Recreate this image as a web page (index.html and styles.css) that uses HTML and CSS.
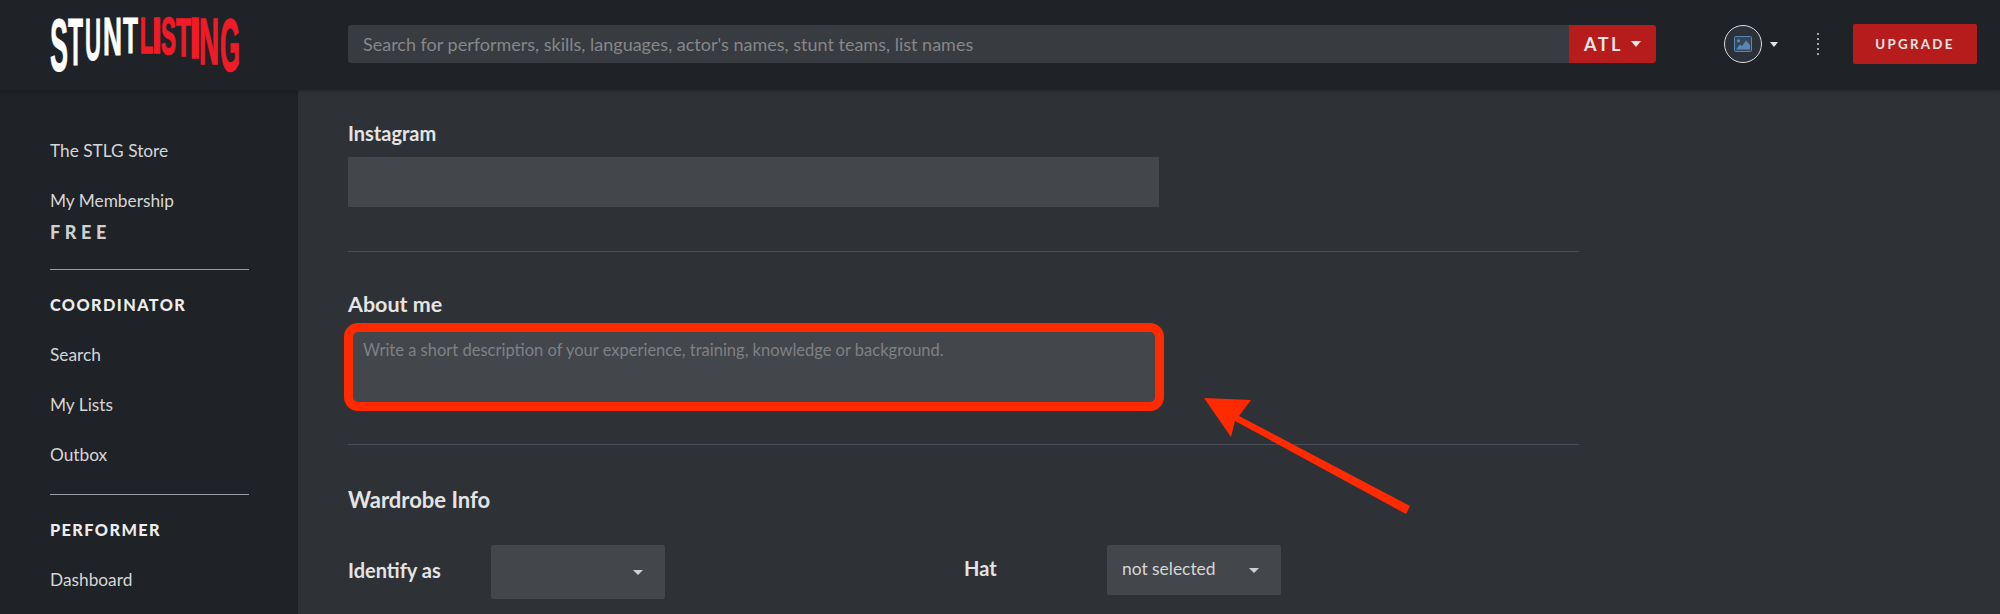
FILE: index.html
```html
<!DOCTYPE html>
<html lang="en">
<head>
<meta charset="utf-8">
<title>Stunt Listing</title>
<link rel="stylesheet" href="styles.css">
</head>
<body>
<header class="topbar">
  <a class="logo" aria-label="Stunt Listing">
    <svg width="200" height="62" viewBox="45 13 200 62">
      <g class="logo-white">
        <text transform="translate(50 71) scale(.36 1)" font-size="75">S</text>
        <text transform="translate(68 65) scale(.367 1)" font-size="67">T</text>
        <text transform="translate(85 60) scale(.37 1)" font-size="60">U</text>
        <text transform="translate(103 55) scale(.496 1)" font-size="53">N</text>
        <text transform="translate(123 53) scale(.49 1)" font-size="50">T</text>
      </g>
      <g class="logo-red">
        <text transform="translate(140 53) scale(.426 1)" font-size="50">L</text>
        <text transform="translate(152 53) scale(.7 1)" font-size="50">I</text>
        <text transform="translate(161 54) scale(.43 1)" font-size="52">S</text>
        <text transform="translate(176 56) scale(.455 1)" font-size="54">T</text>
        <text transform="translate(189.5 58) scale(.75 1)" font-size="57">I</text>
        <text transform="translate(199 64) scale(.426 1)" font-size="65">N</text>
        <text transform="translate(220 71) scale(.343 1)" font-size="75">G</text>
      </g>
    </svg>
  </a>
  <form class="search">
    <div class="search-input">Search for performers, skills, languages, actor's names, stunt teams, list names</div>
    <button class="city" type="button">ATL<span class="caret caret-city"></span></button>
  </form>
  <div class="account">
    <span class="avatar">
      <svg width="18" height="16" viewBox="0 0 18 16">
        <rect class="pic-frame" x="0.5" y="0.5" width="17" height="15" rx="1"/>
        <circle class="pic-fill" cx="4.5" cy="4.8" r="1.6"/>
        <path class="pic-fill" d="M2 13.5 L6 8.5 L8 10 L12 4.5 L16 9 V13.5 Z"/>
      </svg>
    </span>
    <span class="caret caret-account"></span>
  </div>
  <div class="dots"><i></i><i></i><i></i><i></i><i></i></div>
  <button class="upgrade" type="button">UPGRADE</button>
</header>
<div class="body-row">
  <nav class="sidebar">
    <a class="nav-item">The STLG Store</a>
    <a class="nav-item">My Membership</a>
    <div class="plan">FREE</div>
    <hr class="nav-rule">
    <div class="nav-head">COORDINATOR</div>
    <a class="nav-item">Search</a>
    <a class="nav-item">My Lists</a>
    <a class="nav-item">Outbox</a>
    <hr class="nav-rule nav-rule-tight">
    <div class="nav-head">PERFORMER</div>
    <a class="nav-item">Dashboard</a>
  </nav>
  <main class="content">
    <section class="field-block first">
      <label class="field-label">Instagram</label>
      <div class="text-input"></div>
    </section>
    <section class="field-block about">
      <label class="field-label about-label">About me</label>
      <div class="textarea">Write a short description of your experience, training, knowledge or background.
        <span class="highlight"></span>
      </div>
    </section>
    <section class="wardrobe">
      <h2 class="section-title">Wardrobe Info</h2>
      <div class="wardrobe-grid">
        <div class="row">
          <span class="row-label">Identify as</span>
          <div class="select tall"><span></span><span class="caret caret-select"></span></div>
        </div>
        <div class="row">
          <span class="row-label">Hat</span>
          <div class="select"><span class="select-value">not selected</span><span class="caret caret-select"></span></div>
        </div>
        <div class="row"></div>
        <div class="row">
          <span class="row-label"></span>
          <div class="select"><span></span></div>
        </div>
      </div>
    </section>
  </main>
</div>
<svg class="arrow" width="230" height="130" viewBox="1195 390 230 130">
  <path class="arrow-shape" d="M1204 398 L1251 400 L1239 416 L1410 506 L1406 514 L1235 421 L1231 437 Z"/>
</svg>
</body>
</html>
```
FILE: styles.css
```css
* { box-sizing: border-box; }
html, body { margin: 0; height: 614px; overflow: hidden; }
body {
  position: relative;
  background: #2e3136;
  color: #e6e6e6;
  font-family: "Lato", "Open Sans", sans-serif;
  font-size: 16px;
}
.topbar {
  height: 90px;
  background: #1f2226;
  display: flex;
  align-items: center;
  padding: 0 0 2px 45px;
  box-shadow: 0 1px 4px rgba(0,0,0,.25);
  position: relative;
}
.logo { width: 303px; height: 62px; display: block; flex: none; }
.logo svg { display: block; overflow: visible; }
.logo text { font-family: "Liberation Sans", sans-serif; font-weight: 700; stroke-width: 1; }
.logo-white { fill: #fff; stroke: #fff; }
.logo-red { fill: #f01b27; stroke: #f01b27; }
.logo-red text { stroke-width: 1.6; }
.search { display: flex; width: 1309px; height: 38px; flex: none; }
.search-input {
  width: 1221px;
  background: #383b3f;
  color: #85878a;
  font-size: 18px;
  line-height: 38px;
  padding-left: 15px;
  border-radius: 3px 0 0 3px;
}
.city {
  width: 87px;
  background: #b71c1c;
  color: #e6e6e6;
  border: 0;
  border-radius: 0 3px 3px 0;
  font: 700 18px "Lato", sans-serif;
  letter-spacing: 2.5px;
  display: flex;
  align-items: center;
  justify-content: center;
  gap: 8px;
  padding: 0;
}
.caret {
  display: block;
  width: 0;
  height: 0;
  border-style: solid;
  border-color: #e6e6e6 transparent transparent;
}
.caret-city { border-width: 6px 5px 0; }
.account { display: flex; align-items: center; margin-left: 67px; gap: 8px; }
.avatar {
  width: 38px;
  height: 38px;
  border: 1.5px solid #dcdcdc;
  border-radius: 50%;
  background: #2b3138;
  display: flex;
  align-items: center;
  justify-content: center;
}
.pic-frame { fill: #33465a; stroke: #5b86b3; }
.pic-fill { fill: #5b86b3; }
.caret-account { border-width: 5px 4.5px 0; }
.dots {
  margin-left: 38px;
  width: 4px;
  height: 22px;
  display: flex;
  flex-direction: column;
  justify-content: space-between;
  align-items: center;
}
.dots i { width: 2px; height: 2px; background: #d0d0d0; border-radius: 50%; display: block; }
.upgrade {
  margin-left: 33px;
  width: 124px;
  height: 40px;
  background: #b71c1c;
  color: #e6e6e6;
  border: 0;
  border-radius: 2px;
  font: 700 13.3px "Lato", sans-serif;
  letter-spacing: 2.3px;
  padding: 0;
}
.body-row { display: flex; height: 524px; }
.sidebar {
  width: 298px;
  flex: none;
  background: #1f2226;
  padding: 36px 50px 0;
  display: flex;
  flex-direction: column;
}
.nav-item {
  font-size: 17.3px;
  line-height: 50px;
  height: 50px;
  color: #d6d6d6;
  flex: none;
}
.plan {
  font-size: 18px;
  font-weight: 900;
  letter-spacing: 4.6px;
  color: #cfcfcf;
  line-height: 20px;
  margin-top: -4px;
  flex: none;
}
.nav-rule {
  width: 199px;
  height: 1px;
  border: 0;
  margin: 27px 0 0;
  background: #9a9ca5;
  flex: none;
}
.nav-rule-tight { margin-top: 14px; }
.nav-head {
  font-size: 16.3px;
  font-weight: 900;
  letter-spacing: 1.4px;
  color: #ececec;
  line-height: 20px;
  margin-top: 25px;
  margin-bottom: 15px;
  flex: none;
}
.content { flex: 1; padding-left: 50px; }
.field-block { width: 1231px; border-bottom: 1px solid #4a4e5c; }
.field-block.first { height: 162px; padding-top: 32px; }
.about { height: 193px; padding-top: 41px; }
.field-label {
  display: block;
  font-size: 20px;
  font-weight: 700;
  color: #e4e4e4;
  line-height: 22px;
  margin-bottom: 13px;
}
.about-label { font-size: 21.5px; margin-bottom: 17px; }
.text-input { width: 811px; height: 50px; background: #43464b; }
.textarea {
  position: relative;
  width: 802px;
  height: 70px;
  margin-left: 5px;
  background: #43464b;
  color: #7f8184;
  font-size: 16.5px;
  line-height: 20px;
  padding: 8px 10px;
}
.highlight {
  position: absolute;
  left: -9px;
  top: -9px;
  width: 820px;
  height: 88px;
  border: 9px solid #ff2a00;
  border-radius: 14px;
}
.section-title {
  font-size: 22px;
  font-weight: 700;
  color: #e4e4e4;
  margin: 0;
  line-height: 26px;
  padding-top: 42px;
}
.wardrobe-grid {
  display: grid;
  grid-template-columns: 616px 320px;
  row-gap: 15px;
  margin-top: 32px;
  align-items: start;
}
.row { display: flex; align-items: center; min-height: 50px; }
.row-label { width: 143px; font-size: 20px; font-weight: 700; color: #e4e4e4; flex: none; padding-bottom: 4px; }
.select {
  width: 174px;
  height: 50px;
  background: #43464b;
  border-radius: 2px;
  display: flex;
  align-items: center;
  justify-content: space-between;
  padding: 0 22px 0 15px;
  font-size: 17.4px;
  color: #d6d6d6;
}
.select-value { padding-bottom: 3px; }
.select.tall { height: 54px; }
.caret-select { border-width: 5.5px 5px 0; border-top-color: #d0d0d0; }
.arrow { position: absolute; left: 1195px; top: 390px; }
.arrow-shape { fill: #ff2a00; }
```
